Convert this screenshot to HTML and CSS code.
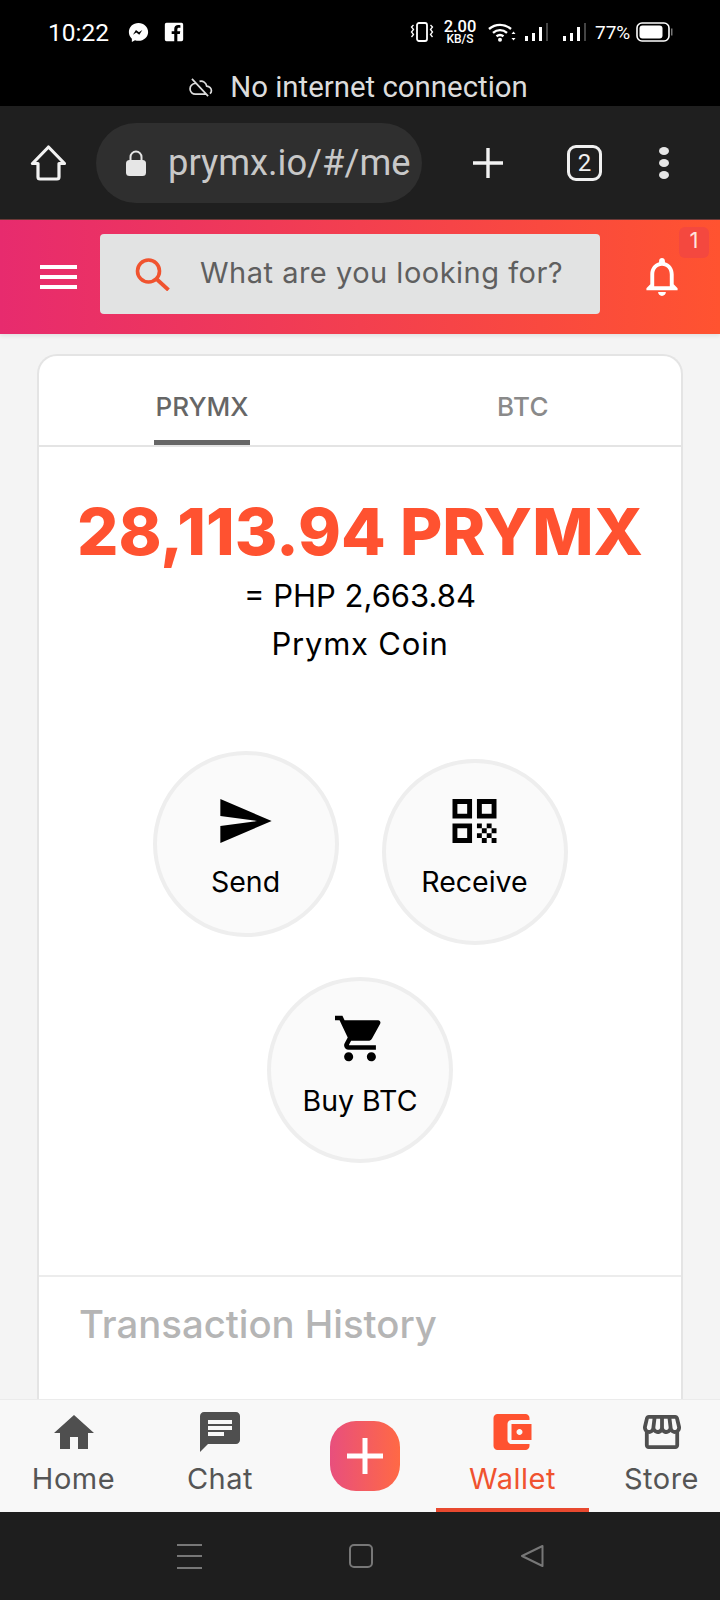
FILE: index.html
```html
<!DOCTYPE html>
<html lang="en">
<head>
<meta charset="UTF-8">
<meta name="viewport" content="width=device-width, initial-scale=1.0">
<title>Prymx Wallet</title>
<link rel="stylesheet" href="styles.css">
</head>
<body>
<div class="phone">
    <div class="system-top">
        <div class="status-row">
            <span class="clock">10:22</span>
            <svg class="messenger" viewBox="0 0 24 24"><path fill="#fff" d="M12 1C5.8 1 1 5.5 1 11.4c0 3.1 1.3 5.8 3.4 7.6v3.9l3.6-2c1.3.4 2.6.6 4 .6 6.2 0 11-4.5 11-10.1S18.200 1 12 1z"/><path fill="#000" d="M5.600 14.600l3.500-5.600 3.400 2.600 3.900-2.600-3.500 5.600-3.400-2.600z"/></svg>
            <svg class="fb" viewBox="0 0 24 24"><path fill="#fff" d="M3 1h18a2 2 0 0 1 2 2v18a2 2 0 0 1-2 2h-5v-8.500h3l.5-3.500H16V8.800c0-1 .5-1.800 1.900-1.800h1.800V3.900c-.6-.1-1.600-.2-2.700-.2-2.800 0-4.700 1.700-4.700 4.700V11H9.200v3.500h3.100V23H3a2 2 0 0 1-2-2V3a2 2 0 0 1 2-2z"/></svg>
            <div class="status-right">
                <svg class="vibrate" viewBox="0 0 24 20"><rect x="7" y="1" width="10" height="18" rx="2" fill="none" stroke="#fff" stroke-width="1.800"/><path d="M3.500 3l-2 2 2 2.500-2 2.500 2 2.500-2 2.500M20.500 3l2 2-2 2.500 2 2.500-2 2.500 2 2.500" fill="none" stroke="#fff" stroke-width="1.300"/></svg>
                <div class="speed"><span class="speed-num">2.00</span><span class="speed-unit">KB/S</span></div>
                <svg class="wifi" viewBox="0 0 28 20"><path d="M1 7c6.500-5.500 15.500-5.500 22 0M5 10.800c4.200-3.600 9.800-3.600 14 0M8.500 14.300c2.300-1.800 4.700-1.800 7 0" fill="none" stroke="#fff" stroke-width="2.400"/><circle cx="12" cy="17.800" r="2" fill="#fff"/><path d="M25.500 9.500l2 2.500h-4zM25.500 18.500l2-2.500h-4z" fill="#fff"/></svg>
                <svg class="signal" viewBox="0 0 26 20"><path d="M1 14h3v5H1zM8 11h3v8H8zM15 5h3v14h-3z" fill="#fff"/><path d="M22 1h2v18h-2z" fill="#444"/></svg>
                <svg class="signal signal-b" viewBox="0 0 26 20"><path d="M1 14h3v5H1zM8 11h3v8H8zM15 5h3v14h-3z" fill="#fff"/><path d="M22 1h2v18h-2z" fill="#444"/></svg>
                <span class="percent">77%</span>
                <svg class="battery" viewBox="0 0 37 20"><rect x="1" y="1" width="32" height="18" rx="5" fill="none" stroke="#fff" stroke-width="1.600"/><rect x="3.500" y="3.500" width="23" height="13" rx="3" fill="#fff"/><rect x="35" y="6.500" width="1.500" height="7" fill="#777"/></svg>
            </div>
        </div>
        <div class="offline-row">
            <svg class="cloud-off" viewBox="0 0 26 20"><path d="M8 5.500C5 6 2 8 2 11.500S5 17 7.500 17H19M12 3.500c3.500-1 7 1.500 7.500 5 3 .3 5 2.500 5 4.800 0 1.200-.6 2.400-1.500 3.200M4 1l17 18" fill="none" stroke="#ddd" stroke-width="1.800"/></svg>
            <span>No internet connection</span>
        </div>
    </div>

    <div class="browser-bar">
        <svg class="browser-home" viewBox="0 0 37 36"><path d="M18.500 2L2.500 18.500h5.500V32a2 2 0 0 0 2 2h17a2 2 0 0 0 2-2V18.500h5.500z" fill="none" stroke="#f2f2f2" stroke-width="3.200" stroke-linejoin="round"/></svg>
        <div class="url-pill">
            <svg class="lock" viewBox="0 0 22 26"><path d="M5.500 11V7a5.500 5.500 0 0 1 11 0v4" fill="none" stroke="#e6e6e6" stroke-width="2"/><rect x="1" y="10" width="20" height="16" rx="3.500" fill="#e6e6e6"/></svg>
            <span class="url-text">prymx.io/#/me</span>
        </div>
        <svg class="browser-plus" viewBox="0 0 32 32"><path d="M16 1v30M1 16h30" stroke="#f2f2f2" stroke-width="3.400"/></svg>
        <div class="tab-count">2</div>
        <div class="browser-dots"><i></i><i></i><i></i></div>
    </div>

    <header class="app-header">
        <div class="hamburger"><i></i><i></i><i></i></div>
        <div class="search-box">
            <svg class="search-icon" viewBox="0 0 35 33"><circle cx="13.500" cy="13" r="11" fill="none" stroke="#f0532f" stroke-width="3.600"/><path d="M21.500 21l12 11" stroke="#f0532f" stroke-width="3.800"/></svg>
            <span class="search-text">What are you looking for?</span>
        </div>
        <div class="bell-wrap">
            <svg class="bell" viewBox="4 2.500 16 19.500"><path fill="#fff" d="M12 22c1.100 0 2-.9 2-2h-4c0 1.100.9 2 2 2zm6-6v-5c0-3.070-1.630-5.640-4.500-6.320V4c0-.83-.67-1.500-1.500-1.500s-1.500.67-1.500 1.500v.68C7.640 5.360 6 7.920 6 11v5l-2 2v1h16v-1l-2-2zm-2 1H8v-6c0-2.480 1.510-4.500 4-4.500s4 2.020 4 4.500v6z"/></svg>
            <span class="badge">1</span>
        </div>
    </header>

    <main class="content">
        <section class="wallet-card">
            <div class="tabs">
                <div class="tab"><span class="tab-label tab-active">PRYMX</span></div>
                <div class="tab"><span class="tab-label">BTC</span></div>
            </div>

            <div class="balance">
                <div class="amount">28,113.94 PRYMX</div>
                <div class="balance-line">= PHP 2,663.84</div>
                <div class="balance-line balance-coin">Prymx Coin</div>
            </div>

            <div class="actions">
                <div class="action-row">
                    <div class="action action-send">
                        <svg class="icon-send" viewBox="2 3 21 18"><path d="M2.010 21L23 12 2.010 3 2 10l15 2-15 2z"/></svg>
                        <span class="action-label">Send</span>
                    </div>
                    <div class="action action-receive">
                        <svg class="icon-qr" viewBox="3 3 18 18"><path d="M3 11h8V3H3v8zm2-6h4v4H5V5zM3 21h8v-8H3v8zm2-6h4v4H5v-4zM13 3v8h8V3h-8zm6 6h-4V5h4v4zM21 19h-2v2h2v-2zM15 13h-2v2h2v-2zM17 15h-2v2h2v-2zM15 17h-2v2h2v-2zM17 19h-2v2h2v-2zM19 17h-2v2h2v-2zM19 13h-2v2h2v-2zM21 15h-2v2h2v-2z"/></svg>
                        <span class="action-label">Receive</span>
                    </div>
                </div>
                <div class="action action-buy">
                    <svg class="icon-cart" viewBox="1 2 22 20"><path d="M7 18c-1.100 0-1.990.9-1.990 2S5.900 22 7 22s2-.9 2-2-.9-2-2-2zM1 2v2h2l3.600 7.590-1.350 2.450c-.16.28-.25.61-.25.96 0 1.100.9 2 2 2h12v-2H7.420c-.14 0-.25-.11-.25-.25l.03-.12.9-1.630h7.450c.75 0 1.410-.41 1.750-1.030l3.580-6.490c.08-.14.12-.31.12-.48 0-.55-.45-1-1-1H5.210l-.94-2H1zm16 16c-1.100 0-1.990.9-1.990 2s.89 2 1.990 2 2-.9 2-2-.9-2-2-2z"/></svg>
                    <span class="action-label">Buy BTC</span>
                </div>
            </div>

            <div class="history">
                <h2 class="history-title">Transaction History</h2>
            </div>
        </section>
    </main>

    <nav class="bottom-nav">
        <div class="nav-item">
            <div class="nav-icon"><svg class="icon-home" viewBox="2 3 20 17"><path d="M10 20v-6h4v6h5v-8h3L12 3 2 12h3v8z"/></svg></div>
            <span class="nav-label">Home</span>
        </div>
        <div class="nav-item">
            <div class="nav-icon"><svg class="icon-chat" viewBox="2 2 20 20"><path d="M20 2H4c-1.100 0-1.990.9-1.990 2L2 22l4-4h14c1.100 0 2-.9 2-2V4c0-1.100-.9-2-2-2zM6 9h12v2H6V9zm8 5H6v-2h8v2zm4-6H6V6h12v2z"/></svg></div>
            <span class="nav-label">Chat</span>
        </div>
        <div class="nav-add">
            <div class="add-btn"><svg class="icon-add" viewBox="0 0 36 36"><path d="M18 0v36M0 18h36" stroke="#fff" stroke-width="5"/></svg></div>
        </div>
        <div class="nav-item nav-active">
            <div class="nav-icon"><svg class="icon-wallet" viewBox="3 3 19 18"><path d="M21 18v1c0 1.100-.9 2-2 2H5c-1.110 0-2-.9-2-2V5c0-1.100.89-2 2-2h14c1.100 0 2 .9 2 2v1h-9c-1.110 0-2 .9-2 2v8c0 1.100.89 2 2 2h9zm-9-2h10V8H12v8zm4-2.500c-.83 0-1.500-.67-1.500-1.500s.67-1.500 1.500-1.500 1.500.67 1.500 1.500-.67 1.500-1.500 1.500z"/></svg></div>
            <span class="nav-label">Wallet</span>
        </div>
        <div class="nav-item nav-store">
            <div class="nav-icon"><svg class="icon-store" viewBox="2 3 20 18"><path d="M21.900 8.890l-1.050-4.370c-.22-.9-1-1.520-1.910-1.520H5.050c-.9 0-1.690.63-1.900 1.520L2.100 8.890c-.24 1.020-.02 2.060.62 2.880.08.11.19.19.28.29V19c0 1.100.9 2 2 2h14c1.100 0 2-.9 2-2v-6.940c.09-.09.2-.18.28-.28.64-.82.87-1.870.62-2.890zm-2.990-3.900l1.050 4.370c.1.420.01.840-.25 1.170-.14.180-.44.470-.94.470-.61 0-1.140-.49-1.210-1.140L16.980 5l1.930-.01zM13 5h1.960l.54 4.520c.05.390-.07.780-.33 1.070-.22.260-.54.410-.95.410-.67 0-1.220-.59-1.220-1.310V5zM8.490 9.520L9.040 5H11v4.690c0 .72-.55 1.310-1.290 1.310-.34 0-.65-.15-.89-.41-.25-.29-.37-.68-.33-1.070zm-4.450-.16L5.050 5h1.970l-.58 4.860c-.08.650-.6 1.140-1.210 1.140-.49 0-.8-.29-.93-.47-.27-.32-.36-.75-.26-1.170zM5 19v-6.030c.08.010.15.030.23.030.87 0 1.660-.36 2.240-.95.6.6 1.400.95 2.310.95.87 0 1.650-.36 2.230-.93.59.57 1.390.93 2.290.93.840 0 1.640-.35 2.240-.95.58.59 1.370.95 2.240.95.08 0 .15-.02.23-.03V19H5z"/></svg></div>
            <span class="nav-label">Store</span>
        </div>
    </nav>

    <div class="system-nav">
        <div class="sys-menu"><i></i><i></i><i></i></div>
        <div class="sys-home"></div>
        <svg class="sys-back" viewBox="0 0 24 24"><path d="M22.500 2L2 12l20.500 10z" fill="none" stroke="#777" stroke-width="2" stroke-linejoin="round"/></svg>
    </div>
</div>
</body>
</html>
```

FILE: styles.css
```css
* {
    box-sizing: border-box;
}
body {
    margin: 0;
    font-family: Inter, "Noto Sans", sans-serif;
    background: #1e1e1e;
}
.phone {
    width: 720px;
    height: 1600px;
    display: flex;
    flex-direction: column;
    overflow: hidden;
}

/* android status bar */
.system-top {
    height: 106px;
    flex: none;
    background: #000;
    color: #fff;
    font-family: Roboto, sans-serif;
}
.status-row {
    height: 64px;
    display: flex;
    align-items: center;
    padding: 0 47px 0 48px;
}
.clock {
    font-size: 24.500px;
    width: 61px;
}
.messenger {
    width: 21px;
    height: 21px;
    margin-left: 19px;
}
.fb {
    width: 20px;
    height: 20px;
    margin-left: 15px;
}
.status-right {
    margin-left: auto;
    display: flex;
    align-items: center;
}
.vibrate {
    width: 24px;
    height: 20px;
}
.speed {
    display: flex;
    flex-direction: column;
    align-items: center;
    width: 32px;
    margin-left: 10px;
    font-weight: 500;
    line-height: 1;
}
.speed-num {
    font-size: 16.500px;
    line-height: 13px;
}
.speed-unit {
    font-size: 12px;
    line-height: 12px;
}
.wifi {
    width: 28px;
    height: 20px;
    margin-left: 12px;
}
.signal {
    width: 26px;
    height: 20px;
    margin-left: 8px;
}
.signal-b {
    margin-left: 12px;
}
.percent {
    width: 35px;
    margin-left: 7px;
    font-size: 19px;
}
.battery {
    width: 37px;
    height: 20px;
    margin-left: 6px;
}
.offline-row {
    height: 42px;
    padding: 4px 4px 0 0;
    display: flex;
    align-items: center;
    justify-content: center;
    gap: 17px;
    font-size: 29.400px;
    color: #dcdcdc;
}
.cloud-off {
    width: 25px;
    height: 19px;
}

/* chrome toolbar */
.browser-bar {
    height: 114px;
    flex: none;
    display: flex;
    align-items: center;
    padding-left: 30px;
    background: #1f1f1f;
    border-bottom: 1px solid #6d3a38;
}
.browser-home {
    width: 37px;
    height: 36px;
}
.url-pill {
    width: 326px;
    height: 80px;
    margin-left: 29px;
    padding-left: 29px;
    display: flex;
    align-items: center;
    border-radius: 40px;
    background: #2f2f2f;
}
.lock {
    width: 22px;
    height: 26px;
}
.url-text {
    margin-left: 21px;
    font-family: Roboto, sans-serif;
    font-size: 36.300px;
    color: #c8c8c8;
    white-space: nowrap;
}
.browser-plus {
    width: 32px;
    height: 32px;
    margin-left: 50px;
}
.tab-count {
    width: 35px;
    height: 36px;
    margin-left: 63px;
    display: flex;
    align-items: center;
    justify-content: center;
    border: 3px solid #f0f0f0;
    border-radius: 9px;
    color: #f0f0f0;
    font-family: Roboto, sans-serif;
    font-size: 24px;
}
.browser-dots {
    margin-left: 57px;
    display: flex;
    flex-direction: column;
    gap: 4px;
}
.browser-dots i {
    display: block;
    width: 10px;
    height: 8px;
    border-radius: 50%;
    background: #e6e6e6;
}

/* app header */
.app-header {
    height: 114px;
    flex: none;
    display: flex;
    align-items: center;
    padding-left: 40px;
    background: linear-gradient(90deg, #e72b6e, #ff5330);
    box-shadow: 0 2px 4px rgba(0, 0, 0, 0.08);
    position: relative;
}
.hamburger {
    width: 37px;
    display: flex;
    flex-direction: column;
    gap: 6px;
}
.hamburger i {
    display: block;
    height: 4px;
    background: #fff;
}
.search-box {
    width: 500px;
    height: 80px;
    margin-left: 23px;
    margin-top: -6px;
    padding-left: 35px;
    display: flex;
    align-items: center;
    border-radius: 4px;
    background: #e2e3e3;
}
.search-icon {
    width: 35px;
    height: 33px;
}
.search-text {
    margin-left: 30px;
    padding-bottom: 4px;
    font-size: 29px;
    letter-spacing: 0.5px;
    color: #5f5f5f;
    white-space: nowrap;
}
.bell-wrap {
    position: relative;
    margin-left: 45px;
    width: 34px;
    height: 38px;
}
.bell {
    display: block;
    width: 34px;
    height: 38px;
}
.badge {
    position: absolute;
    left: 34px;
    top: -31px;
    width: 30px;
    height: 31px;
    border-radius: 6px;
    background: #f4483f;
    color: #ffe3dc;
    font-size: 22px;
    line-height: 26px;
    text-align: center;
}

/* wallet card */
.content {
    flex: 1;
    min-height: 0;
    overflow: hidden;
    padding: 20px 37px 0;
    background: #f4f4f4;
}
.wallet-card {
    height: 100%;
    overflow: hidden;
    border: 2px solid #e4e4e4;
    border-bottom: none;
    border-radius: 20px 20px 0 0;
    background: #fff;
}
.tabs {
    display: grid;
    grid-template-columns: 326px 1fr;
    height: 91px;
    border-bottom: 2px solid #e4e4e4;
}
.tab {
    text-align: center;
}
.tab-label {
    display: inline-block;
    padding: 31px 2px 13px;
    border-bottom: 5px solid transparent;
    font-size: 26px;
    font-weight: 500;
    letter-spacing: 0.4px;
    line-height: 40px;
    color: #8a8a8a;
}
.tab-active {
    letter-spacing: 0;
    color: #666;
    border-bottom-color: #666;
}
.balance {
    padding-top: 45px;
    text-align: center;
}
.amount {
    font-size: 65px;
    font-weight: 800;
    line-height: 80px;
    color: #ff5230;
    white-space: nowrap;
}
.balance-line {
    font-size: 31px;
    line-height: 48px;
    color: #000;
}
.balance-coin {
    letter-spacing: 0.8px;
}
.actions {
    margin-top: 83px;
    display: flex;
    flex-direction: column;
    align-items: center;
}
.action-row {
    display: flex;
    gap: 43px;
    align-items: flex-start;
}
.action {
    width: 186px;
    height: 186px;
    display: flex;
    flex-direction: column;
    align-items: center;
    border: 4px solid #eee;
    border-radius: 50%;
    background: #fafafa;
}
.action-send {
    padding-top: 44px;
}
.action-receive {
    margin-top: 8px;
    padding-top: 36px;
}
.action-buy {
    margin-top: 32px;
    padding-top: 33px;
}
.action-label {
    margin-top: 20px;
    font-size: 28.500px;
    line-height: 38px;
    color: #000;
}
.action-buy .action-label {
    margin-top: 19px;
}
.icon-send {
    width: 52px;
    height: 44px;
}
.icon-qr {
    width: 45px;
    height: 44px;
}
.icon-cart {
    width: 50px;
    height: 49px;
}
.history {
    margin-top: 112px;
    padding: 24px 0 0 40px;
    border-top: 2px solid #ececec;
}
.history-title {
    margin: 0;
    font-size: 38.300px;
    font-weight: 500;
    line-height: 46px;
    color: #b5b5b5;
    white-space: nowrap;
}

/* bottom navigation */
.bottom-nav {
    height: 113px;
    flex: none;
    display: grid;
    grid-template-columns: 147px 146px 143px 153px 131px;
    background: #f8f8f8;
    border-top: 1px solid #ebebeb;
    color: #555;
}
.nav-item {
    display: flex;
    flex-direction: column;
    align-items: center;
    padding-top: 11px;
    fill: #4f4f4f;
}
.nav-icon {
    height: 42px;
    display: flex;
    align-items: center;
}
.nav-label {
    margin-top: 7px;
    font-size: 29px;
    letter-spacing: 0.5px;
    line-height: 38px;
}
.nav-active {
    color: #f0532f;
    fill: #ff5230;
    border-bottom: 4px solid #e8492f;
}
.nav-store {
    margin-left: 14px;
}
.nav-add {
    display: flex;
    align-items: center;
    justify-content: center;
}
.add-btn {
    width: 70px;
    height: 70px;
    display: flex;
    align-items: center;
    justify-content: center;
    border-radius: 26px;
    background: linear-gradient(90deg, #e84f7d, #ff6945);
}
.icon-add {
    width: 36px;
    height: 36px;
}
.icon-home {
    width: 40px;
    height: 34px;
}
.icon-chat {
    width: 40px;
    height: 40px;
}
.icon-wallet {
    width: 39px;
    height: 36px;
}
.icon-store {
    width: 38px;
    height: 36px;
}

/* android nav bar */
.system-nav {
    height: 88px;
    flex: none;
    display: flex;
    align-items: center;
    justify-content: center;
    gap: 147px;
    background: #1e1e1e;
}
.sys-menu {
    width: 25px;
    height: 25px;
    display: flex;
    flex-direction: column;
    justify-content: space-between;
}
.sys-menu i {
    display: block;
    height: 2px;
    background: #777;
}
.sys-home {
    width: 24px;
    height: 24px;
    border: 2px solid #777;
    border-radius: 5px;
}
.sys-back {
    width: 24px;
    height: 24px;
}
```
